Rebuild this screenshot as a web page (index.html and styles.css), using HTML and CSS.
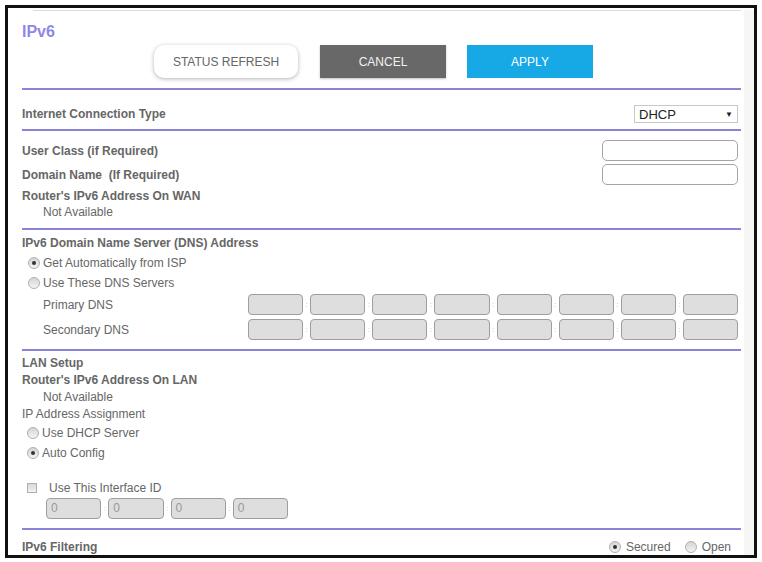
FILE: index.html
```html
<!DOCTYPE html>
<html lang="en">
<head>
  <meta charset="UTF-8">
  <title>IPv6</title>
  <link rel="stylesheet" href="styles.css">
</head>
<body>
  <div class="frame">
    <div class="page">
      <div class="topline"></div>

      <div class="bloque cabecera">
        <h1>IPv6</h1>
        <div class="botones">
          <button class="btn btn-refresh">STATUS REFRESH</button>
          <button class="btn btn-cancel">CANCEL</button>
          <button class="btn btn-apply">APPLY</button>
        </div>
      </div>

      <div class="bloque conexion">
        <div class="fila">
          <span class="negrita">Internet Connection Type</span>
          <div class="selector">DHCP <span class="flecha">&#9660;</span></div>
        </div>
      </div>

      <div class="bloque wan">
        <div class="fila campo">
          <span class="negrita">User Class (if Required)</span>
          <div class="caja-texto"></div>
        </div>
        <div class="fila campo">
          <span class="negrita">Domain Name&nbsp; (If Required)</span>
          <div class="caja-texto"></div>
        </div>
        <div class="linea negrita">Router's IPv6 Address On WAN</div>
        <div class="linea sangria">Not Available</div>
      </div>

      <div class="bloque dns">
        <div class="linea negrita">IPv6 Domain Name Server (DNS) Address</div>
        <div class="opcion"><span class="radio marcado"></span>Get Automatically from ISP</div>
        <div class="opcion"><span class="radio"></span>Use These DNS Servers</div>
        <div class="fila dns-fila">
          <span class="sangria">Primary DNS</span>
          <div class="cajas">
            <span class="caja"></span><i>:</i><span class="caja"></span><i>:</i><span class="caja"></span><i>:</i><span class="caja"></span><i>:</i><span class="caja"></span><i>:</i><span class="caja"></span><i>:</i><span class="caja"></span><i>:</i><span class="caja"></span>
          </div>
        </div>
        <div class="fila dns-fila">
          <span class="sangria">Secondary DNS</span>
          <div class="cajas">
            <span class="caja"></span><i>:</i><span class="caja"></span><i>:</i><span class="caja"></span><i>:</i><span class="caja"></span><i>:</i><span class="caja"></span><i>:</i><span class="caja"></span><i>:</i><span class="caja"></span><i>:</i><span class="caja"></span>
          </div>
        </div>
      </div>

      <div class="bloque lan">
        <div class="linea negrita">LAN Setup</div>
        <div class="linea negrita">Router's IPv6 Address On LAN</div>
        <div class="linea sangria">Not Available</div>
        <div class="linea">IP Address Assignment</div>
        <div class="opcion"><span class="radio"></span>Use DHCP Server</div>
        <div class="opcion"><span class="radio marcado"></span>Auto Config</div>
        <div class="check-fila"><span class="check"></span>Use This Interface ID</div>
        <div class="cajas interfaz">
          <span class="caja">0</span><i>:</i><span class="caja">0</span><i>:</i><span class="caja">0</span><i>:</i><span class="caja">0</span>
        </div>
      </div>

      <div class="bloque filtro">
        <div class="fila">
          <span class="negrita">IPv6 Filtering</span>
          <div class="filtro-opciones">
            <span class="radio marcado"></span>Secured
            <span class="radio abierto"></span>Open
          </div>
        </div>
      </div>
    </div>
  </div>
</body>
</html>
```

FILE: styles.css
```css
body {
  margin: 0;
  background: #fff;
  font-family: "Liberation Sans", Arial, sans-serif;
  font-size: 12px;
  color: #666;
}
.frame {
  margin: 5px;
  border: 3px solid #111;
  height: 547px;
  overflow: hidden;
}
.page {
  height: 100%;
  padding: 0 3px 0 14px;
  border-right: 10px solid #f6f6f6;
}
.topline {
  margin: 2px 0 0 11px;
  border-top: 1px solid #dcdcdc;
}

.bloque {
  border-bottom: 2px solid #8a84d9;
}
.negrita {
  font-weight: bold;
}
.linea {
  line-height: 16px;
}
.sangria {
  padding-left: 21px;
}
.fila {
  display: flex;
  align-items: center;
  justify-content: space-between;
  padding-right: 3px;
}

/* cabecera */
.cabecera {
  padding: 11px 0 10px;
}
h1 {
  margin: 0;
  font-size: 16px;
  line-height: 20px;
  color: #8f88e6;
}
.botones {
  display: flex;
  gap: 21px;
  margin: 3px 0 0 132px;
}
.btn {
  height: 33px;
  border: none;
  font-family: "Liberation Sans", Arial, sans-serif;
  font-size: 12px;
  padding: 0;
}
.btn-refresh {
  width: 144px;
  background: #fff;
  color: #666;
  border-radius: 10px;
  box-shadow: 0 1px 4px rgba(0,0,0,0.3);
}
.btn-cancel {
  width: 126px;
  margin-left: 1px;
  background: #686868;
  color: #f2f2f2;
  box-shadow: 0 1px 2px rgba(0,0,0,0.25);
}
.btn-apply {
  width: 126px;
  background: #17a9e5;
  color: #fff;
}

/* tipo de conexion */
.conexion {
  padding: 15px 0 6px;
}
.selector {
  width: 94px;
  height: 16px;
  padding: 0 4px;
  border: 1px solid #c8c8c8;
  display: flex;
  justify-content: space-between;
  align-items: center;
  color: #222;
  font-size: 13px;
}
.flecha {
  font-size: 8px;
  color: #222;
}

/* wan */
.wan {
  padding: 9px 0 8px;
}
.campo {
  height: 21px;
  margin-bottom: 3px;
}
.caja-texto {
  width: 134px;
  height: 19px;
  border: 1px solid #a4a4a4;
  border-radius: 5px;
}

/* dns */
.dns {
  padding: 5px 0 9px;
}
.opcion {
  display: flex;
  align-items: center;
  height: 20px;
  padding-left: 6px;
}
.dns .linea {
  margin-bottom: 2px;
}
.radio {
  display: inline-block;
  width: 10px;
  height: 10px;
  border-radius: 50%;
  border: 1px solid #b0b0b0;
  background: linear-gradient(#d4d4d4, #f4f4f4);
  margin-right: 3px;
  position: relative;
}
.radio.marcado::after {
  content: "";
  position: absolute;
  left: 3px;
  top: 3px;
  width: 4px;
  height: 4px;
  border-radius: 50%;
  background: #333;
}
.dns-fila {
  height: 21px;
  margin: 1px 0 4px;
}
.dns-fila:last-child {
  margin-bottom: 0;
}
.cajas {
  display: flex;
  align-items: center;
  width: 490px;
}
.cajas i {
  width: 7px;
  text-align: center;
  font-style: normal;
  font-size: 8px;
  color: #bbb;
}
.caja {
  flex: 1;
  height: 19px;
  background: #dedede;
  border: 1px solid #9e9e9e;
  border-radius: 4px;
}

/* lan */
.lan {
  padding: 4px 0 9px;
}
.lan .linea {
  line-height: 17px;
}
.lan .opcion {
  padding-left: 5px;
}
.lan .opcion:first-of-type {
  margin-top: 1px;
}
.check-fila {
  display: flex;
  align-items: center;
  height: 16px;
  margin-top: 17px;
  padding-left: 5px;
}
.check {
  width: 8px;
  height: 8px;
  border: 1px solid #b0b0b0;
  background: linear-gradient(#d8d8d8, #f2f2f2);
  margin-right: 12px;
}
.interfaz {
  width: 242px;
  margin: 2px 0 0 24px;
}
.interfaz .caja {
  height: 19px;
  line-height: 19px;
  padding-left: 4px;
  color: #999;
  font-size: 12px;
}

/* filtro */
.filtro {
  border-bottom: none;
  padding-top: 10px;
}
.filtro-opciones {
  display: flex;
  align-items: center;
  margin-right: 7px;
}
.filtro-opciones .radio {
  margin-right: 5px;
}
.radio.abierto {
  margin-left: 14px;
}
```
